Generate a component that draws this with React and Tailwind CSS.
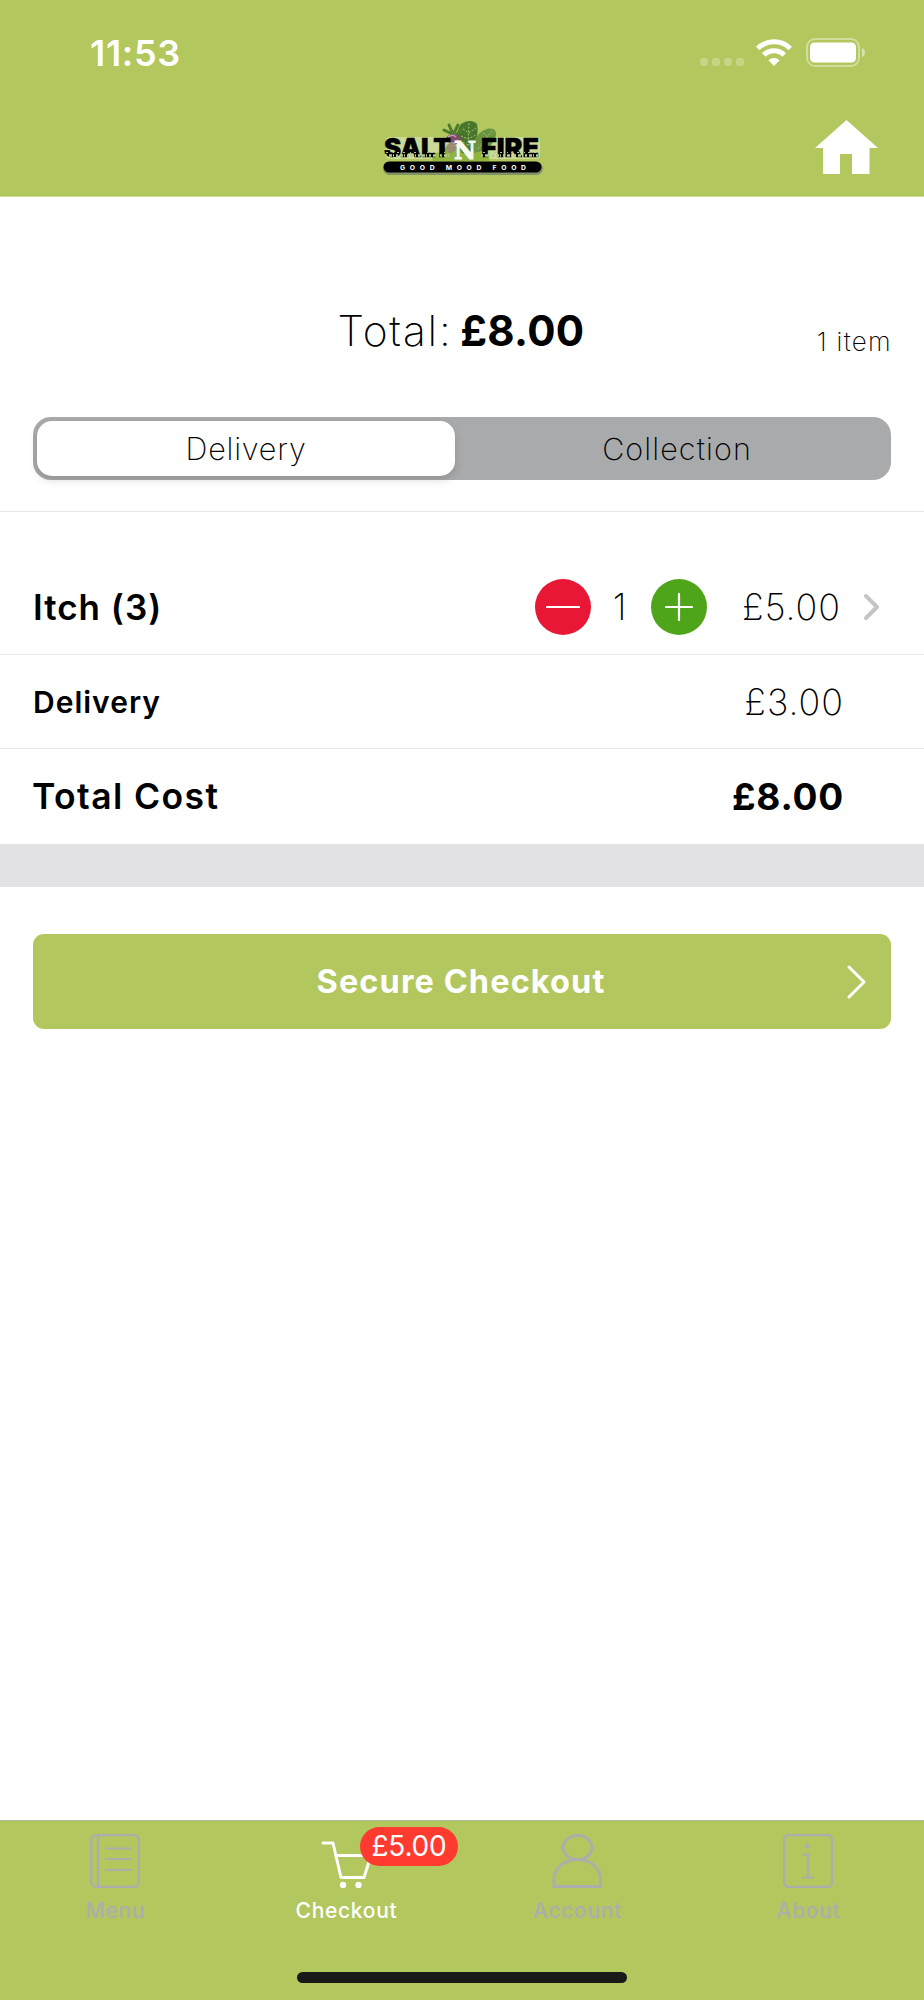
import React from "react";

const tabs = [
    { name: "Menu", Icon: MenuIcon, active: false },
    { name: "Checkout", Icon: CartIcon, active: true, badge: "£5.00" },
    { name: "Account", Icon: AccountIcon, active: false },
    { name: "About", Icon: AboutIcon, active: false },
];

function MenuIcon() {
    return (
        <svg width="50" height="54" viewBox="0 0 50 54" fill="none" stroke="currentColor" strokeWidth="2.200">
            <rect x="1.100" y="1.100" width="47.800" height="51.800" rx="5" />
            <path d="M8 1v52" />
            <path d="M16.500 14.500h24M16.500 25h24M16.500 36h24" strokeLinecap="round" />
        </svg>
    );
}

function CartIcon() {
    return (
        <svg width="50" height="54" viewBox="0 0 50 54" fill="none" stroke="currentColor" strokeWidth="3">
            <path d="M2 9h10l8 34.500h23l7-22H14.500" strokeLinejoin="round" strokeLinecap="round" />
            <circle cx="22" cy="51" r="3.200" fill="currentColor" stroke="none" />
            <circle cx="37.500" cy="51" r="3.200" fill="currentColor" stroke="none" />
        </svg>
    );
}

function AccountIcon() {
    return (
        <svg width="50" height="54" viewBox="0 0 50 54" fill="none" stroke="currentColor" strokeWidth="2.800">
            <ellipse cx="25.500" cy="13.500" rx="14.300" ry="12.200" />
            <path d="M2 52.500v-7C2 34 12.500 25.700 25.500 25.700S48.600 34 48.600 45.500v7z" />
        </svg>
    );
}

function AboutIcon() {
    return (
        <svg width="50" height="54" viewBox="0 0 50 54" fill="none" stroke="currentColor" strokeWidth="2.200">
            <rect x="1.100" y="1.100" width="47.800" height="51.800" rx="4" />
            <circle cx="24" cy="12" r="2.300" fill="currentColor" stroke="none" />
            <path d="M20.500 20.500H25v23M20.500 43.500H30" strokeLinecap="round" />
        </svg>
    );
}

function WifiIcon() {
    return (
        <svg width="36" height="27" viewBox="0 0 36 27" fill="none" stroke="white" strokeWidth="5">
            <path d="M1.700 9.500a23.200 23.200 0 0 1 32.600 0" />
            <path d="M7.800 16a14.300 14.300 0 0 1 20.400 0" />
            <path d="M18 27l-5.600-5.700a8 8 0 0 1 11.200 0z" fill="white" stroke="none" />
        </svg>
    );
}

function BatteryIcon() {
    return (
        <svg width="60" height="29" viewBox="0 0 60 29" fill="none">
            <rect x="1" y="1" width="52" height="27" rx="8" stroke="white" strokeOpacity=".4" strokeWidth="2" />
            <rect x="4" y="4.500" width="46" height="20" rx="4.500" fill="white" />
            <path d="M56 10c4 1.500 4 7.500 0 9z" fill="white" fillOpacity=".5" />
        </svg>
    );
}

function Logo() {
    return (
        <svg width="164" height="54" viewBox="0 0 164 54" fontFamily="Inter, sans-serif">
            <rect x="4" y="16" width="154" height="22" rx="3" fill="#e3eed0" fillOpacity=".5" />
            {/* leaves and radish behind the name */}
            <path d="M51 40c-2-5 2-9 6-8 0-6 8-7 11-3 3-5 14-5 17 0 4-4 14-3 14 3 6 0 10 4 8 8z" fill="#91b63e" />
            <path d="M80 32C74 22 74 9 79 3c6-4 12-4 16 0 2 11-2 25-9 30z" fill="#47752b" />
            <path d="M92 32c-3-10 2-20 13-24 8-2 11 4 8 9-2 6-7 11-12 13z" fill="#6a9440" />
            <path d="M71 13l-4-9M70 13L62 9M72 12l4-8M75 13l6-6" stroke="#4c7b2c" strokeWidth="3" strokeLinecap="round" />
            <path d="M64 17c4-7 15-4 15 2-2 6-11 7-15-2z" fill="#7c4d63" />
            <path d="M66 16c4-3 6-2 8 0M68 22c4 1 6 0 8-3" stroke="#c29ab0" strokeWidth="1.500" fill="none" />
            <path d="M87 2l-1 25M81 8l6 4 7-5M79 15l7 3 8-4M81 21l5 3 5-3M110 10L95 29M101 12l5 4" stroke="#a5c269" strokeWidth="1" strokeDasharray="2 1.500" fill="none" />
            <circle cx="69" cy="27" r="5" fill="#9c8c70" />
            <g fontWeight="900" fontSize="25.500" stroke="#000" strokeWidth=".5">
                <text x="2" y="36" textLength="67" lengthAdjust="spacingAndGlyphs">SALT</text>
                <text x="99" y="36" textLength="58" lengthAdjust="spacingAndGlyphs">FIRE</text>
            </g>
            <path d="M4 31.500h60M101 31.500h55" stroke="#b5c78a" strokeWidth="1" strokeDasharray="2 5 1 3 2 4" />
            <path d="M3 34.500h64M99 34.500h58" stroke="#b8ca8a" strokeWidth="2.500" strokeDasharray="2 2 3 1 1 2" />
            <text x="72" y="37.500" textLength="22" lengthAdjust="spacingAndGlyphs" fontFamily="DejaVu Serif, serif" fontWeight="700" fontSize="25" fill="#f8faec" stroke="#f8faec">N</text>
            <rect x="1" y="41" width="160" height="13" rx="6.500" fill="#829269" />
            <rect x="1.500" y="40.500" width="158" height="11" rx="5.500" fill="#000" />
            <text x="18" y="48.500" textLength="126" fontSize="6.800" fontWeight="700" fill="#fff">GOOD MOOD FOOD</text>
        </svg>
    );
}

function Header() {
    return (
        <header className="h-[197px] bg-[#b2c75d] border-b border-[#d1dd9d]">
            <div className="h-[106px] flex justify-between items-start pl-[90px] pr-[58px] pt-[38px]">
                <span className="text-[36px] leading-[30px] font-semibold text-white tracking-[0.7px]">11:53</span>
                <div className="flex items-start">
                    <div className="flex gap-1 mt-5 mr-3">
                        <i className="size-2 rounded-[3px] bg-white/25" />
                        <i className="size-2 rounded-[3px] bg-white/25" />
                        <i className="size-2 rounded-[3px] bg-white/25" />
                        <i className="size-2 rounded-[3px] bg-white/25" />
                    </div>
                    <div className="mt-px mr-[14px]"><WifiIcon /></div>
                    <BatteryIcon />
                </div>
            </div>
            <div className="grid grid-cols-3 items-start px-[46px]">
                <span />
                <div className="mt-[15px] flex justify-center pl-[5px]"><Logo /></div>
                <button className="mt-[14px] justify-self-end">
                    <svg width="63" height="54" viewBox="0 0 63 54" fill="white">
                        <path d="M31.500 0L63 28h-8.500v26H37V34H25v20H8V28H0z" />
                    </svg>
                </button>
            </div>
        </header>
    );
}

function Summary() {
    return (
        <section className="h-[315px] border-b border-[#e6e6e7] px-[33px] pt-[106px]">
            <div className="grid grid-cols-[1fr_auto_1fr] items-start">
                <span />
                <h1 className="-ml-0.5 text-[42.500px] leading-[56px] font-extralight tracking-[1.8px] [word-spacing:-6px]">
                    Total: <b className="text-[42px] font-bold tracking-[0.3px]">£8.00</b>
                </h1>
                <span className="justify-self-end mt-[23px] -mr-px text-[26px] leading-8 font-extralight tracking-[1.3px]">1 item</span>
            </div>
            <div className="mt-[58px] h-[63px] rounded-[18px] bg-[#a9aaac] p-1 flex">
                <button className="w-[418px] rounded-[15px] bg-white shadow-[0_4px_10px_rgba(0,0,0,0.14)] text-[30.500px] font-extralight tracking-[0.8px]">Delivery</button>
                <button className="flex-1 pl-[12px] text-[30.500px] font-extralight tracking-[1.1px]">Collection</button>
            </div>
        </section>
    );
}

function OrderLines() {
    return (
        <section>
            <div className="h-[143px] pt-[48px] border-b border-[#e8e8e9] flex items-center pl-[33px] pr-[44px]">
                <span className="flex-1 pt-px text-[35px] font-semibold tracking-[1px]">Itch (3)</span>
                <button className="size-14 rounded-full bg-[#e81735] flex items-center justify-center">
                    <svg width="34" height="28" viewBox="0 0 34 28" stroke="white" strokeWidth="2.200" strokeLinecap="round"><path d="M1 14h32" /></svg>
                </button>
                <span className="w-[60px] pr-[3px] text-center text-[36px] font-extralight">1</span>
                <button className="size-14 rounded-full bg-[#4fa51a] flex items-center justify-center">
                    <svg width="28" height="28" viewBox="0 0 28 28" stroke="white" strokeWidth="2.200" strokeLinecap="round"><path d="M1 14h26M14 1v26" /></svg>
                </button>
                <span className="w-[134px] text-right text-[36px] font-extralight tracking-[1px]">£5.00</span>
                <svg className="ml-[23px]" width="16" height="28" viewBox="0 0 16 28" fill="none" stroke="#c5c5c7" strokeWidth="4" strokeLinecap="round" strokeLinejoin="round"><path d="M2 3l11 11L2 25" /></svg>
            </div>
            <div className="h-[94px] border-b border-[#e8e8e9] flex items-center justify-between pl-[33px] pr-[80px]">
                <span className="pt-px text-[30px] font-semibold tracking-[1px]">Delivery</span>
                <span className="text-[36px] font-extralight tracking-[1px]">£3.00</span>
            </div>
            <div className="h-[95px] flex items-center justify-between pl-[32px] pr-[80px]">
                <span className="text-[35.500px] font-semibold tracking-[1.4px]">Total Cost</span>
                <span className="text-[37px] font-bold tracking-[0.8px]">£8.00</span>
            </div>
            <div className="h-[43px] bg-[#e2e2e4]" />
        </section>
    );
}

function TabBar() {
    return (
        <nav className="h-[180px] bg-[#b2c75d] border-t border-[#b1b99a] flex flex-col items-center">
            <div className="w-full grid grid-cols-4 pt-[13px]">
                {tabs.map(({ name, Icon, active, badge }) => (
                    <button key={name} className={`flex flex-col items-center ${active ? "text-white" : "text-[#adadad]"}`}>
                        <span className="relative mr-px">
                            <Icon />
                            {badge && (
                                <span className="absolute left-[39px] -top-[7px] h-[39px] w-[98px] rounded-full bg-[#ff3b30] text-white text-[28px] leading-[39px] text-center tracking-[-0.2px]">
                                    {badge}
                                </span>
                            )}
                        </span>
                        <span className="mt-[9px] text-[21px] leading-7 font-medium tracking-[0.7px]">{name}</span>
                    </button>
                ))}
            </div>
            <div className="mt-auto mb-[17px] w-[330px] h-[11px] rounded-full bg-[#191919]" />
        </nav>
    );
}

export default function App() {
    return (
        <div className="w-[924px] h-[2000px] bg-white text-black font-['Inter',sans-serif] flex flex-col overflow-hidden">
            <Header />
            <main className="flex-1">
                <Summary />
                <OrderLines />
                <div className="px-[33px] pt-[47px]">
                    <button className="w-full h-[95px] rounded-[11px] bg-[#b2c75d] text-white grid grid-cols-[1fr_auto_1fr] items-center pr-6">
                        <span />
                        <span className="pt-0.5 text-[32.500px] font-bold pl-[22px] tracking-[1.1px]">Secure Checkout</span>
                        <svg className="justify-self-end" width="20" height="34" viewBox="0 0 20 34" fill="none" stroke="white" strokeWidth="3" strokeLinecap="round" strokeLinejoin="round"><path d="M2 2l15 15L2 32" /></svg>
                    </button>
                </div>
            </main>
            <TabBar />
        </div>
    );
}
